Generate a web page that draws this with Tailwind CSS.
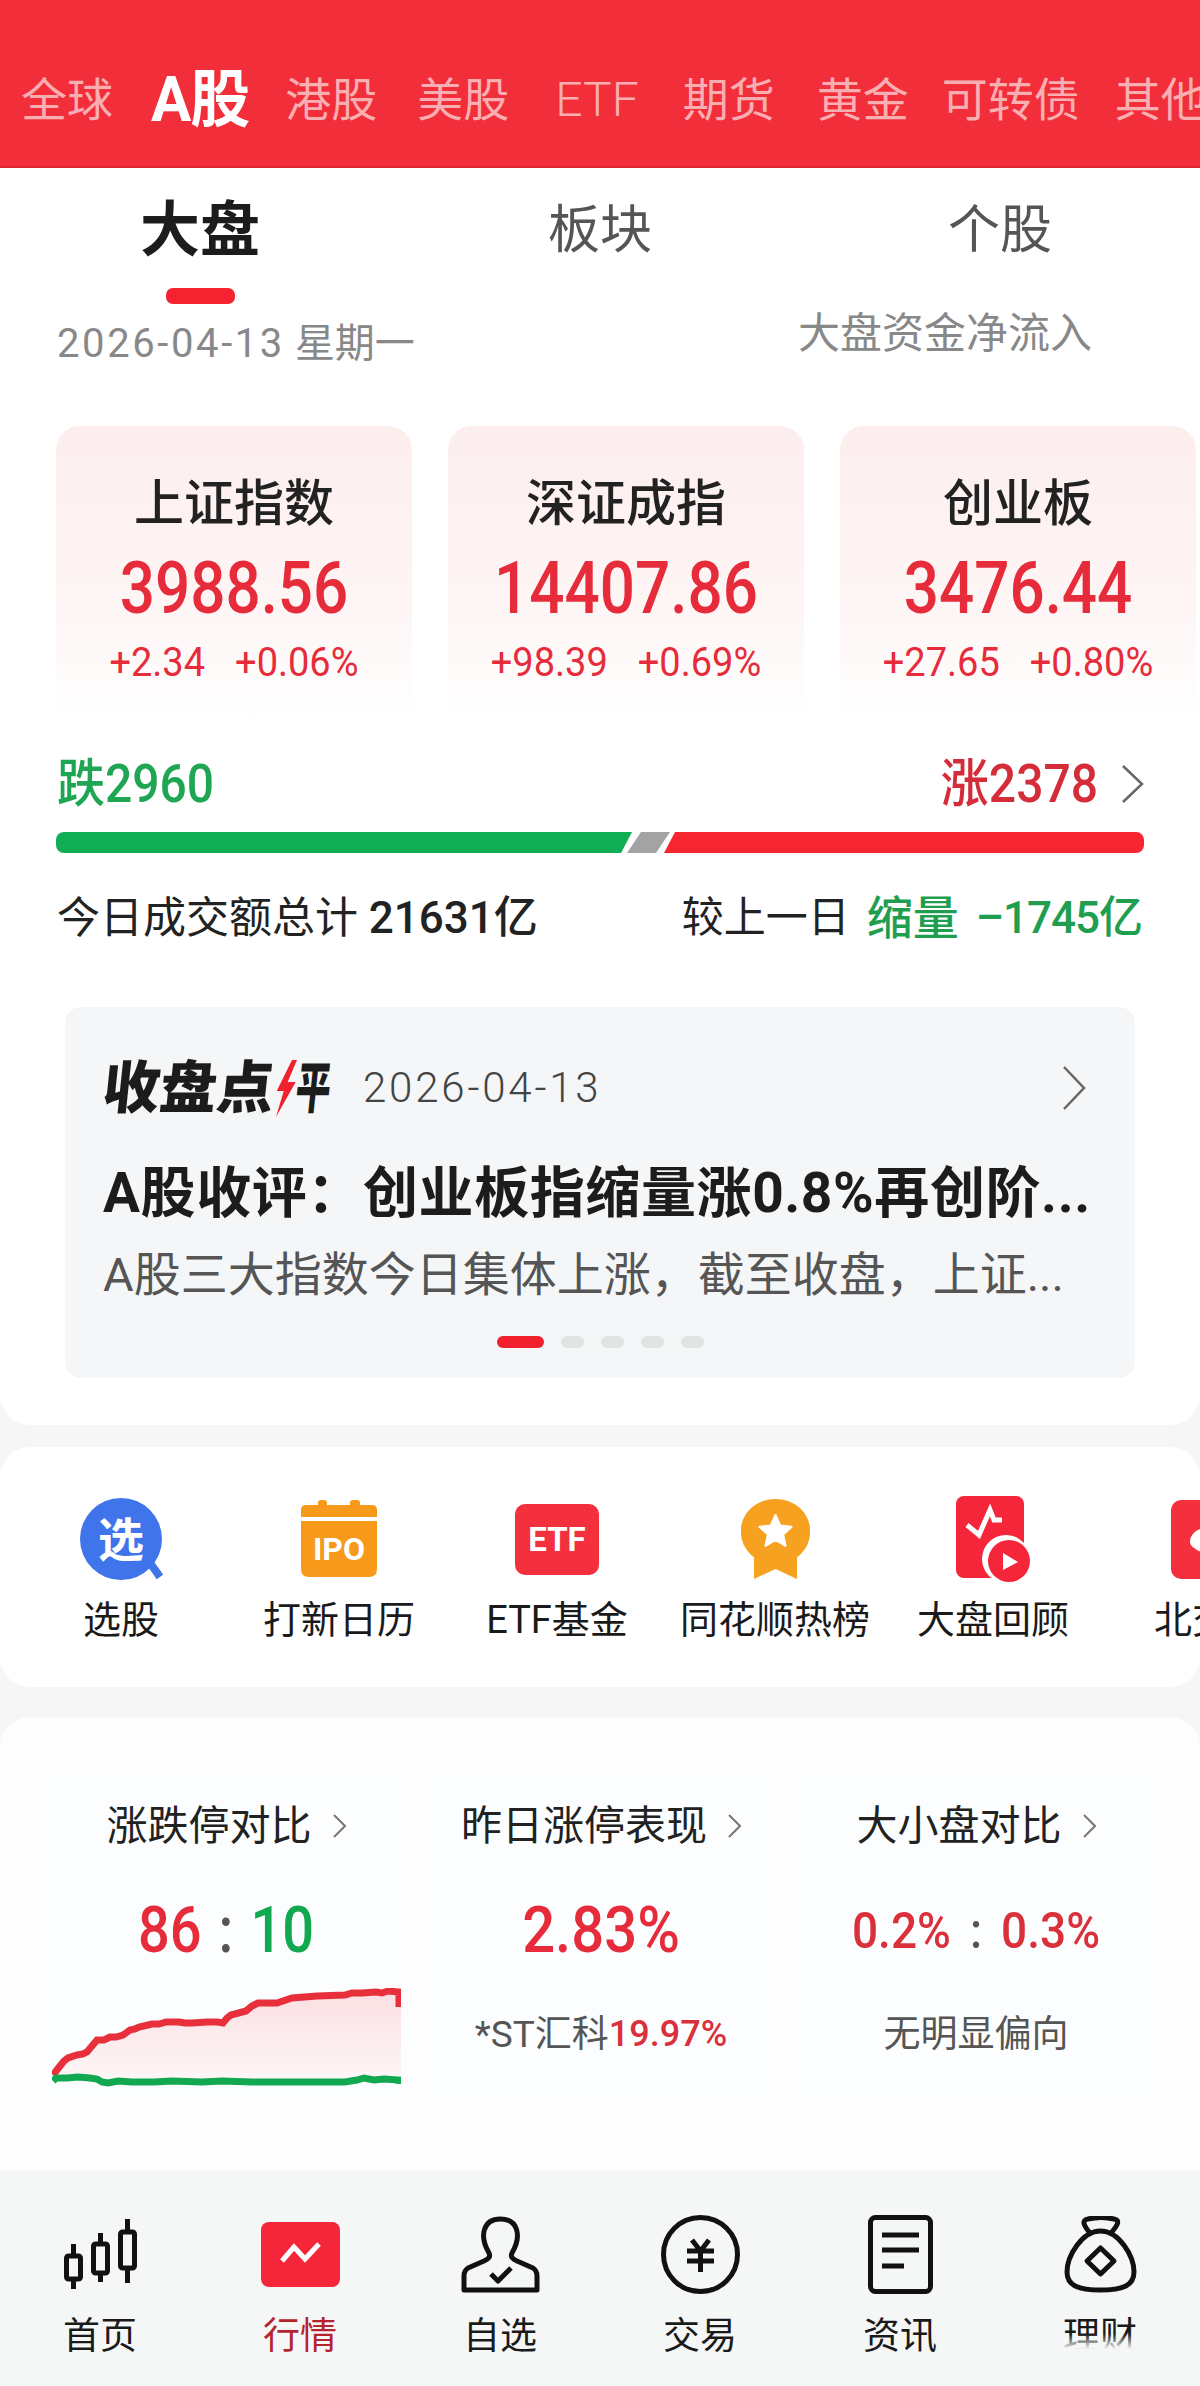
<!DOCTYPE html>
<html lang="zh">
<head>
<meta charset="utf-8">
<script src="https://cdn.jsdelivr.net/npm/@tailwindcss/browser@4"></script>
</head>
<body class="bg-[#f6f6f6] font-['Roboto','Noto_Sans_CJK_SC',sans-serif]">
<div class="w-[1200px] h-[2386px] overflow-hidden relative">

  <header class="h-[168px] bg-[#f12e3a] border-b-2 border-[#d92632] pt-[70px]">
    <div class="flex items-center h-[60px] pl-[21px] text-[46px] leading-none text-[#f9aeb2] whitespace-nowrap">
      <span>全球</span>
      <span class="ml-[38px] w-[106px] text-[60px] font-bold text-white -tracking-[1px] scale-y-[1.05]">A股</span>
      <span class="ml-[36px]">港股</span>
      <span class="ml-[40px]">美股</span>
      <span class="ml-[46px] text-[48px] font-light">ETF</span>
      <span class="ml-[44px]">期货</span>
      <span class="ml-[42px]">黄金</span>
      <span class="ml-[33px]">可转债</span>
      <span class="ml-[35px]">其他</span>
    </div>
  </header>

  <section class="bg-white h-[1257px] rounded-b-[30px]">
    <div class="grid grid-cols-3 h-[120px] pt-[6px] items-center text-center leading-none text-[#555]">
      <span class="text-[60px] font-bold text-[#1c1c1c]">大盘</span>
      <span class="text-[52px]">板块</span>
      <span class="text-[52px]">个股</span>
    </div>
    <div class="w-[69px] h-[16px] ml-[166px] bg-[#f4232f] rounded-[7px]"></div>
    <div class="flex justify-between items-start h-[122px] pl-[57px] pr-[108px] text-[#888] leading-none">
      <span class="mt-[20px] text-[40px]"><span class="tracking-[2.6px]">2026-04-13</span> 星期一</span>
      <span class="mt-[9px] text-[42px]">大盘资金净流入</span>
    </div>

    <div class="flex h-[295px] pl-[56px] gap-[36px] leading-none">
      <div class="w-[356px] shrink-0 rounded-t-[24px] bg-linear-to-b from-[#fdeeee] via-[#fef5f5] via-60% to-white flex flex-col items-center pt-[53px]">
        <span class="h-[50px] flex items-center text-[50px] font-medium text-[#222]">上证指数</span>
        <span class="h-[60px] mt-[30px] flex items-center text-[62px] font-medium text-[#e62c3b] scale-y-[1.15]">3988.56</span>
        <span class="h-[30px] mt-[28px] flex items-center gap-[30px] text-[38px] text-[#e62c3b] scale-y-[1.08]"><span>+2.34</span><span>+0.06%</span></span>
      </div>
      <div class="w-[356px] shrink-0 rounded-t-[24px] bg-linear-to-b from-[#fdeeee] via-[#fef5f5] via-60% to-white flex flex-col items-center pt-[53px]">
        <span class="h-[50px] flex items-center text-[50px] font-medium text-[#222]">深证成指</span>
        <span class="h-[60px] mt-[30px] flex items-center text-[62px] font-medium text-[#e62c3b] scale-y-[1.15]">14407.86</span>
        <span class="h-[30px] mt-[28px] flex items-center gap-[30px] text-[38px] text-[#e62c3b] scale-y-[1.08]"><span>+98.39</span><span>+0.69%</span></span>
      </div>
      <div class="w-[356px] shrink-0 rounded-t-[24px] bg-linear-to-b from-[#fdeeee] via-[#fef5f5] via-60% to-white flex flex-col items-center pt-[53px]">
        <span class="h-[50px] flex items-center text-[50px] font-medium text-[#222]">创业板</span>
        <span class="h-[60px] mt-[30px] flex items-center text-[62px] font-medium text-[#e62c3b] scale-y-[1.15]">3476.44</span>
        <span class="h-[30px] mt-[28px] flex items-center gap-[30px] text-[38px] text-[#e62c3b] scale-y-[1.08]"><span>+27.65</span><span>+0.80%</span></span>
      </div>
    </div>

    <div class="flex justify-between items-center h-[50px] mt-[38px] pl-[57px] pr-[56px] text-[48px] font-medium leading-none">
      <span class="text-[#1fa653] scale-y-[1.1] origin-center">跌2960</span>
      <span class="flex items-center text-[#d52c3a]"><span class="scale-y-[1.1]">涨2378</span>
        <svg class="ml-[23px]" width="23" height="38" viewBox="0 0 23 38" fill="none" stroke="#666" stroke-width="2.5"><path d="M2 1 L21 19 L2 37"/></svg>
      </span>
    </div>

    <div class="flex h-[21px] mt-[23px] mx-[56px]">
      <div class="w-[576px] bg-[#10ad55] rounded-l-[8px] [clip-path:polygon(0_0,100%_0,calc(100%-11px)_100%,0_100%)]"></div>
      <div class="w-[43px] -ml-[5px] bg-[#a3a3a3] [clip-path:polygon(14px_0,100%_0,calc(100%-14px)_100%,0_100%)]"></div>
      <div class="flex-1 -ml-[6px] bg-[#f5262f] rounded-r-[8px] [clip-path:polygon(11px_0,100%_0,100%_100%,0_100%)]"></div>
    </div>

    <div class="flex justify-between items-center h-[50px] mt-[40px] pl-[57px] pr-[58px] leading-none text-[#222]">
      <span class="text-[43px]">今日成交额总计 <span class="text-[44px] font-medium">21631亿</span></span>
      <span class="flex items-center text-[42px]">较上一日<span class="ml-[17px] text-[46px] font-medium text-[#1f9e50]">缩量</span><span class="ml-[17px] text-[44px] font-medium text-[#1f9e50] -tracking-[1px]">–1745亿</span></span>
    </div>

    <div class="w-[1070px] h-[371px] mt-[64px] ml-[65px] bg-[#f4f6f7] rounded-[16px] pt-[56px] px-[38px] relative">
      <div class="flex items-center h-[50px] leading-none">
        <span class="-skew-x-6 flex items-center font-black text-[57px] text-[#1c1c1c] w-[226px] whitespace-nowrap">收盘点<svg class="ml-[2px] shrink-0" width="20" height="57" viewBox="0 0 20 57" fill="#f0202c"><path d="M13 0 L1 31 L8 31 L3 57 L19 22 L11 22 L18 0Z"/></svg><span class="inline-block scale-x-[0.62] origin-left text-[56px]">平</span></span>
        <span class="ml-[34px] text-[42px] font-light text-[#444] tracking-[2.8px]">2026-04-13</span>
        <svg class="ml-auto mr-[11px]" width="24" height="44" viewBox="0 0 24 44" fill="none" stroke="#666" stroke-width="2.5"><path d="M2 1 L22 22 L2 43"/></svg>
      </div>
      <div class="h-[56px] mt-[52px] flex items-center text-[55px] font-bold text-[#1c1c1c] leading-none whitespace-nowrap tracking-[0.6px]">A股收评：创业板指缩量涨0.8%再创阶...</div>
      <div class="h-[50px] mt-[28px] flex items-center text-[47px] text-[#555] leading-none whitespace-nowrap">A股三大指数今日集体上涨，截至收盘，上证...</div>
      <div class="flex justify-center items-center gap-[17px] h-[12px] mt-[37px]">
        <span class="w-[47px] h-[12px] rounded-full bg-[#f0202c]"></span>
        <span class="w-[23px] h-[12px] rounded-full bg-[#e2e4e4]"></span>
        <span class="w-[23px] h-[12px] rounded-full bg-[#e2e4e4]"></span>
        <span class="w-[23px] h-[12px] rounded-full bg-[#e2e4e4]"></span>
        <span class="w-[23px] h-[12px] rounded-full bg-[#e2e4e4]"></span>
      </div>
    </div>
  </section>

  <section class="bg-white h-[240px] mt-[22px] rounded-[30px] pt-[47px] pl-[12px] flex overflow-hidden">
    <div class="w-[218px] shrink-0 flex flex-col items-center">
      <div class="h-[90px] flex items-center">
        <svg width="83" height="82" viewBox="0 0 83 82"><ellipse cx="41" cy="41" rx="41" ry="41" fill="#3f74ea"/><path d="M70 65 L80 79" stroke="#3f74ea" stroke-width="8"/><text x="41" y="58" text-anchor="middle" font-size="46" font-weight="700" fill="#fff">选</text></svg>
      </div>
      <span class="h-[44px] mt-[14px] flex items-center text-[38px] text-[#1a1a1a] whitespace-nowrap">选股</span>
    </div>
    <div class="w-[218px] shrink-0 flex flex-col items-center">
      <div class="h-[90px] flex items-center">
        <svg width="76" height="78" viewBox="0 0 76 78" fill="#f79a1c"><rect x="17" y="0" width="9" height="10" rx="3"/><rect x="49" y="0" width="10" height="10" rx="3"/><path d="M5 5 H71 Q76 5 76 10 V17 H0 V10 Q0 5 5 5Z"/><path d="M0 21 H76 V69 Q76 77 68 77 H8 Q0 77 0 69Z"/><text x="38" y="60" text-anchor="middle" font-size="32" font-weight="700" fill="#fff">IPO</text></svg>
      </div>
      <span class="h-[44px] mt-[14px] flex items-center text-[38px] text-[#1a1a1a] whitespace-nowrap">打新日历</span>
    </div>
    <div class="w-[218px] shrink-0 flex flex-col items-center">
      <div class="h-[90px] flex items-center">
        <svg width="84" height="71" viewBox="0 0 84 71"><rect width="84" height="71" rx="10" fill="#f4303f"/><text x="42" y="47" text-anchor="middle" font-size="33" font-weight="700" fill="#fff">ETF</text></svg>
      </div>
      <span class="h-[44px] mt-[14px] flex items-center text-[38px] text-[#1a1a1a] whitespace-nowrap">ETF基金</span>
    </div>
    <div class="w-[218px] shrink-0 flex flex-col items-center">
      <div class="h-[90px] flex items-center">
        <svg width="69" height="81" viewBox="0 0 69 81" fill="#f6a11f"><ellipse cx="34.5" cy="31" rx="34.5" ry="31"/><ellipse cx="34.5" cy="34" rx="34.5" ry="31"/><path d="M13 50 V80 L34.5 70 L56 80 V50Z"/><path d="M34.5 16 L39.2 26.5 L50.7 27.7 L42.1 35.5 L44.5 46.8 L34.5 41 L24.5 46.8 L26.9 35.5 L18.3 27.7 L29.8 26.5Z" fill="#fff" stroke="#fff" stroke-width="2" stroke-linejoin="round"/></svg>
      </div>
      <span class="h-[44px] mt-[14px] flex items-center text-[38px] text-[#1a1a1a] whitespace-nowrap">同花顺热榜</span>
    </div>
    <div class="w-[218px] shrink-0 flex flex-col items-center">
      <div class="h-[90px] flex items-center">
        <svg width="74" height="87" viewBox="0 0 74 87"><rect width="68" height="82" rx="8" fill="#f5263a"/><path d="M11 29 L23 39 L34 14 L38 24 L46 24" fill="none" stroke="#fff" stroke-width="5"/><circle cx="50" cy="63" r="24" fill="#fff"/><circle cx="53" cy="65" r="21" fill="#f5263a"/><path d="M47 57 L62 66 L47 74Z" fill="#fff"/></svg>
      </div>
      <span class="h-[44px] mt-[14px] flex items-center text-[38px] text-[#1a1a1a] whitespace-nowrap">大盘回顾</span>
    </div>
    <div class="w-[218px] shrink-0 flex flex-col items-center">
      <div class="h-[90px] flex items-center">
        <svg width="80" height="79" viewBox="0 0 80 79"><rect width="80" height="79" rx="10" fill="#f4303f"/><path d="M40 27 C28 27 19 33 19 42 C19 47 28 52 40 56 C52 52 61 47 61 42 C61 33 52 27 40 27Z" fill="#fff"/></svg>
      </div>
      <span class="h-[44px] mt-[14px] flex items-center text-[38px] text-[#1a1a1a] whitespace-nowrap">北交所</span>
    </div>
  </section>

  <section class="bg-[#fdfdfe] h-[453px] mt-[30px] rounded-t-[30px] pt-[58px] pl-[46px] flex gap-[15px] items-start">
    <div class="w-[360px] h-[325px] bg-[#fcfdfe] pt-[29px] flex flex-col items-center leading-none">
      <div class="h-[44px] flex items-center gap-[21px] text-[41px] text-[#222]"><span>涨跌停对比</span><svg width="13" height="24" viewBox="0 0 13 24" fill="none" stroke="#777" stroke-width="2"><path d="M1 1 L12 12 L1 23"/></svg></div>
      <div class="h-[60px] mt-[52px] flex items-center text-[56px] font-medium scale-y-[1.15]"><span class="text-[#e62c3b]">86</span><span class="mx-[17px] text-[#555]">:</span><span class="text-[#12a850]">10</span></div>
      <svg class="mt-[28px]" width="349" height="100" viewBox="0 0 349 100">
        <defs><linearGradient id="fill" x1="0" y1="0" x2="0" y2="1"><stop offset="0" stop-color="#fadfe2"/><stop offset="1" stop-color="#fef6f7"/></linearGradient></defs>
        <path d="M1 87 L8 78 L16 70 L25 67 L35 64 L40 58 L45 52 L58 49 L71 47 L78 42 L87 39 L100 36 L114 34 L127 34 L140 35 L155 34 L171 34 L179 27 L194 23 L200 18 L206 15 L225 15 L240 10 L265 8 L293 7 L310 5 L324 4 L347 4 L349 17 L349 92 L1 92Z" fill="url(#fill)"/>
        <path d="M1 87 L8 78 L12 73 L16 70 L25 67 L31 66 L35 64 L40 58 L45 52 L52 52 L58 49 L64 49 L71 47 L78 42 L83 41 L87 39 L100 36 L107 36 L114 34 L127 34 L133 35 L140 35 L155 34 L165 34 L171 35 L175 30 L179 27 L194 23 L200 18 L206 15 L225 15 L240 10 L265 8 L293 7 L300 5 L310 5 L324 4 L330 5 L336 3 L347 4 L347 19" fill="none" stroke="#e8303c" stroke-width="7"/>
        <path d="M1 93 L4 90 L15 90 L26 89 L38 90 L45 91 L50 94 L56 95 L66 93 L80 94 L102 94 L120 93 L150 94 L170 93 L200 94 L293 94 L305 92 L312 90 L322 92 L332 91 L347 92 L347 96" fill="none" stroke="#12a850" stroke-width="7"/>
      </svg>
    </div>
    <div class="w-[360px] h-[325px] bg-[#fcfdfe] pt-[29px] flex flex-col items-center leading-none">
      <div class="h-[44px] flex items-center gap-[21px] text-[41px] text-[#222]"><span>昨日涨停表现</span><svg width="13" height="24" viewBox="0 0 13 24" fill="none" stroke="#777" stroke-width="2"><path d="M1 1 L12 12 L1 23"/></svg></div>
      <div class="h-[60px] mt-[52px] flex items-center text-[58px] font-medium text-[#e62c3b] scale-y-[1.12]">2.83%</div>
      <div class="h-[44px] mt-[52px] flex items-center text-[37px] text-[#555]">*ST汇科<span class="text-[36px] font-medium text-[#d9303c]">19.97%</span></div>
    </div>
    <div class="w-[360px] h-[325px] bg-[#fcfdfe] pt-[29px] flex flex-col items-center leading-none">
      <div class="h-[44px] flex items-center gap-[21px] text-[41px] text-[#222]"><span>大小盘对比</span><svg width="13" height="24" viewBox="0 0 13 24" fill="none" stroke="#777" stroke-width="2"><path d="M1 1 L12 12 L1 23"/></svg></div>
      <div class="h-[60px] mt-[52px] flex items-center text-[46px] font-medium text-[#d9303c] scale-y-[1.1]">0.2%<span class="mx-[19px] text-[#555]">:</span>0.3%</div>
      <div class="h-[44px] mt-[52px] flex items-center text-[37px] text-[#555]">无明显偏向</div>
    </div>
  </section>

  <nav class="absolute left-0 right-0 bottom-0 h-[216px] bg-[#f5f7f7] grid grid-cols-6 pt-[42px] leading-none text-[#1a1a1a]">
    <div class="flex flex-col items-center">
      <div class="h-[84px] flex items-center">
        <svg width="73" height="70" viewBox="0 0 73 70" fill="none" stroke="#111" stroke-width="5"><rect x="2.5" y="37" width="14" height="23" rx="2"/><path d="M9.5 25 V37 M9.5 60 V70"/><rect x="29.5" y="25" width="14" height="29" rx="2"/><path d="M36.5 14 V25 M36.5 54 V63"/><rect x="56.5" y="13" width="14" height="36" rx="2"/><path d="M63.5 0 V13 M63.5 49 V64"/></svg>
      </div>
      <span class="h-[44px] mt-[18px] flex items-center text-[37px]">首页</span>
    </div>
    <div class="flex flex-col items-center">
      <div class="h-[84px] flex items-center">
        <svg width="79" height="65" viewBox="0 0 79 65"><rect width="79" height="65" rx="8" fill="#f5263a"/><path d="M21 39 L33 25 L44 37 L58 22" fill="none" stroke="#fff" stroke-width="5"/></svg>
      </div>
      <span class="h-[44px] mt-[18px] flex items-center text-[37px] text-[#b5232d]">行情</span>
    </div>
    <div class="flex flex-col items-center">
      <div class="h-[84px] flex items-center">
        <svg width="79" height="77" viewBox="0 0 79 77" fill="none" stroke="#111" stroke-width="5" stroke-linejoin="round"><path d="M28 37 C18 20 22 3 39.5 3 C57 3 61 20 51 37 C49 41 52 43 56 45 L72 52 C75 54 76 56 76 60 L76 74 L3 74 L3 60 C3 56 4 54 7 52 L23 45 C27 43 30 41 28 37Z"/><path d="M30 58 L37 65 L50 52"/></svg>
      </div>
      <span class="h-[44px] mt-[18px] flex items-center text-[37px]">自选</span>
    </div>
    <div class="flex flex-col items-center">
      <div class="h-[84px] flex items-center">
        <svg width="79" height="79" viewBox="0 0 79 79" fill="none" stroke="#111" stroke-width="5"><ellipse cx="39.5" cy="39.5" rx="37" ry="37"/><path d="M31 25 L39.5 36 L48 25 M26 36 H53 M26 46 H53 M39.5 36 V57"/></svg>
      </div>
      <span class="h-[44px] mt-[18px] flex items-center text-[37px]">交易</span>
    </div>
    <div class="flex flex-col items-center">
      <div class="h-[84px] flex items-center">
        <svg width="65" height="79" viewBox="0 0 65 79" fill="none" stroke="#111" stroke-width="5"><rect x="2.5" y="2.5" width="60" height="74" rx="5"/><path d="M14 20 H51 M14 35 H51 M14 51 H36"/></svg>
      </div>
      <span class="h-[44px] mt-[18px] flex items-center text-[37px]">资讯</span>
    </div>
    <div class="flex flex-col items-center">
      <div class="h-[84px] flex items-center">
        <svg width="73" height="77" viewBox="0 0 73 77" fill="none" stroke="#111" stroke-width="5" stroke-linejoin="round"><path d="M26 17 C20 10 17 4 24 3 C32 1 42 1 50 3 C57 4 53 10 47 17"/><path d="M36.5 15 C55 15 70 40 70 56 C70 70 58 74 36.5 74 C15 74 3 70 3 56 C3 40 18 15 36.5 15Z"/><path d="M36.5 32 L50 45 L36.5 58 L23 45Z"/></svg>
      </div>
      <span class="h-[44px] mt-[18px] flex items-center text-[37px]">理财</span>
    </div>
    <div class="absolute left-[985px] top-[164px] w-[205px] h-[38px] bg-linear-to-b from-[#f5f7f7]/0 to-[#f5f7f7] to-40%"></div>
  </nav>
</div>
</body>
</html>
